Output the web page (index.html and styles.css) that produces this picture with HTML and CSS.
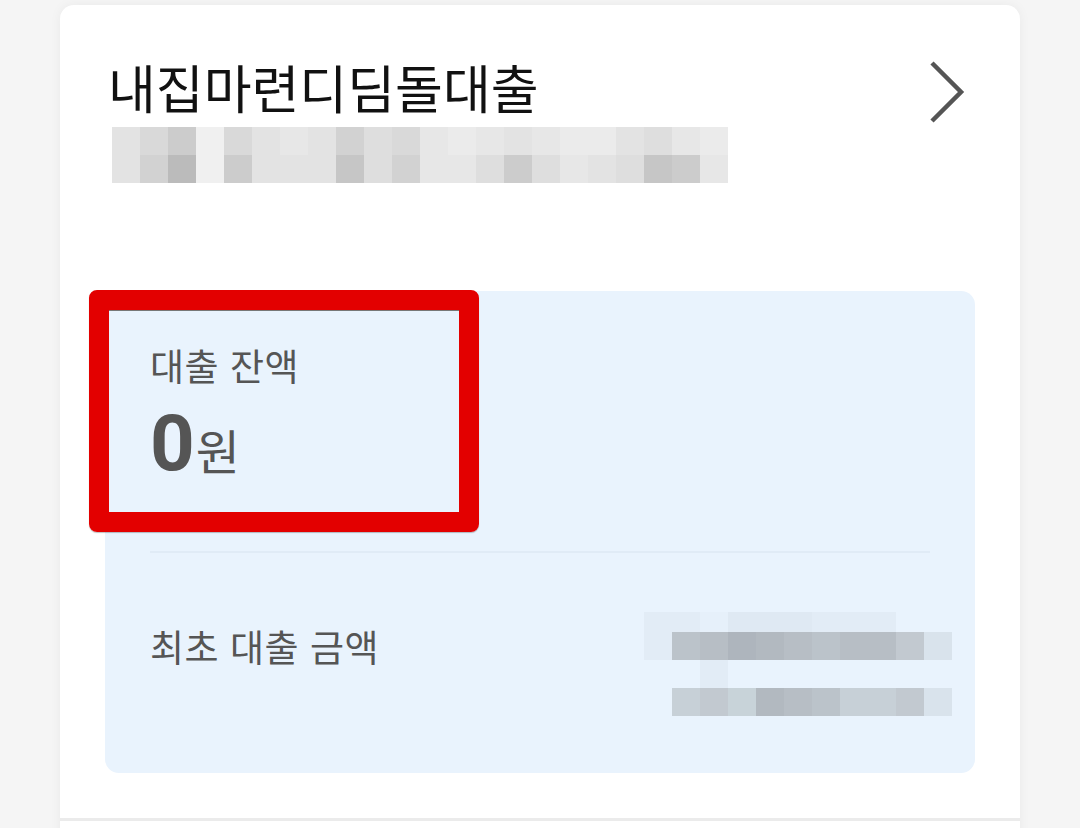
FILE: index.html
```html
<!DOCTYPE html>
<html lang="ko">
<head>
<meta charset="utf-8">
<link rel="stylesheet" href="styles.css">
</head>
<body>
<div class="card">
  <div class="head">
    <div class="titles">
      <h1 class="title">내집마련디딤돌대출</h1>
      <div class="mosaic top-mosaic">
        <i class="c3"></i><i class="c5"></i><i class="c7"></i><i class="c0"></i><i class="c5"></i><i class="c3"></i><i class="c2"></i><i class="c3"></i><i class="c6"></i><i class="c4"></i><i class="c5"></i><i class="c2"></i><i class="c1"></i><i class="c2"></i><i class="c3"></i><i class="c2"></i><i class="c1"></i><i class="c1"></i><i class="c3"></i><i class="c4"></i><i class="c2"></i><i class="c1"></i>
        <i class="c3"></i><i class="c6"></i><i class="c9"></i><i class="c0"></i><i class="c7"></i><i class="c3"></i><i class="c3"></i><i class="c3"></i><i class="c8"></i><i class="c4"></i><i class="c6"></i><i class="c2"></i><i class="c2"></i><i class="c4"></i><i class="c7"></i><i class="c4"></i><i class="c2"></i><i class="c3"></i><i class="c4"></i><i class="c8"></i><i class="c7"></i><i class="c2"></i>
      </div>
    </div>
    <svg class="chevron" width="40" height="64" viewBox="0 0 40 64" aria-hidden="true">
      <path d="M4 2 L33 31 L4 60" fill="none" stroke="#555" stroke-width="4.5"/>
    </svg>
  </div>

  <div class="loan-box">
    <div class="balance">
      <div class="label">대출 잔액</div>
      <div class="amount"><span class="num">0</span><span class="unit">원</span></div>
      <div class="highlight"></div>
    </div>
    <div class="divider"></div>
    <div class="row">
      <div class="label">최초 대출 금액</div>
      <div class="mosaic value-mosaic">
        <i class="b1"></i><i class="b1"></i><i class="b0"></i><i class="b2"></i><i class="b2"></i><i class="b2"></i><i class="b1"></i><i class="b1"></i><i class="b1"></i><i class="bn"></i><i class="bn"></i>
        <i class="b1"></i><i class="g3"></i><i class="g4"></i><i class="g6"></i><i class="g5"></i><i class="g4"></i><i class="g3"></i><i class="g4"></i><i class="g4"></i><i class="g2"></i><i class="b3"></i>
        <i class="bn"></i><i class="bn"></i><i class="b1"></i><i class="bn"></i><i class="bn"></i><i class="bn"></i><i class="bn"></i><i class="bn"></i><i class="bn"></i><i class="bn"></i><i class="bn"></i>
        <i class="bn"></i><i class="g1"></i><i class="g2"></i><i class="g0"></i><i class="g5"></i><i class="g4"></i><i class="g3"></i><i class="g1"></i><i class="g1"></i><i class="g2"></i><i class="b3"></i>
      </div>
    </div>
  </div>
  <div class="sep"></div>
  <div class="more"></div>
</div>
</body>
</html>
```

FILE: styles.css
```css
* { box-sizing: border-box; }

html, body {
  margin: 0;
  padding: 0;
  height: 100%;
  overflow: hidden;
}

body {
  background: #f5f5f5;
  font-family: "Noto Sans CJK KR", "Noto Sans", sans-serif;
  color: #555;
}

.card {
  margin: 5px 60px 0;
  background: #fff;
  border-radius: 14px 14px 0 0;
  box-shadow: 0 0 12px rgba(0, 0, 0, 0.05);
}

.head {
  display: flex;
  justify-content: space-between;
  align-items: flex-start;
  padding: 52px 52px 0 48px;
}

.title {
  margin: 0;
  font-size: 52px;
  font-weight: 400;
  line-height: 60px;
  color: #111;
  letter-spacing: 0;
}

.mosaic {
  display: grid;
  grid-auto-rows: 28px;
}

.mosaic i { display: block; }

.top-mosaic {
  margin-top: 10px;
  margin-left: 4px;
  grid-template-columns: repeat(22, 28px);
}

.c0 { background: #f0f0f0; }
.c1 { background: #ebebeb; }
.c2 { background: #e7e7e7; }
.c3 { background: #e3e3e3; }
.c4 { background: #dedede; }
.c5 { background: #d9d9d9; }
.c6 { background: #d2d2d2; }
.c7 { background: #cccccc; }
.c8 { background: #c6c6c6; }
.c9 { background: #bbbbbb; }

.chevron {
  margin-top: 4px;
  flex: none;
}

.loan-box {
  margin: 108px 45px 0;
  background: #e9f3fd;
  border-radius: 14px;
  padding: 0 45px;
}

.balance {
  position: relative;
  height: 260px;
  padding-top: 50px;
}

.label {
  font-size: 37px;
  line-height: 48px;
  color: #555;
  letter-spacing: 0.5px;
}

.amount {
  display: flex;
  align-items: baseline;
  margin-top: 10px;
  line-height: 90px;
}

.num {
  font-family: "Roboto", "Noto Sans", sans-serif;
  font-weight: 700;
  font-size: 78px;
  color: #555;
}

.unit {
  font-size: 48px;
  margin-left: 1px;
  color: #555;
}

.highlight {
  position: absolute;
  left: -61px;
  top: -1px;
  width: 390px;
  height: 242px;
  border: 20px solid #e30000;
  border-radius: 8px;
  box-shadow: inset 0 1px 0 #777, 0 1px 1px rgba(0, 0, 0, 0.25);
}

.divider {
  height: 2px;
  background: #e0ebf6;
}

.row {
  height: 220px;
  display: flex;
  justify-content: space-between;
  align-items: flex-start;
  padding-top: 59px;
}

.row .label {
  margin-top: 10px;
}

.value-mosaic {
  grid-template-columns: repeat(11, 28px);
  grid-template-rows: 20px 28px 28px 28px;
  margin-right: -22px;
}

.bn { background: transparent; }
.b0 { background: #e6f0fa; }
.b1 { background: #e2ecf6; }
.b2 { background: #dfe9f3; }
.b3 { background: #d9e3ec; }
.g0 { background: #c8d3d9; }
.g1 { background: #c7d0d7; }
.g2 { background: #c2c9d0; }
.g3 { background: #bbc3ca; }
.g4 { background: #b7bec5; }
.g5 { background: #b2b9c0; }
.g6 { background: #aeb5bd; }

.sep {
  margin-top: 45px;
  height: 3px;
  background: #ebebeb;
}

.more {
  height: 200px;
  background: #fff;
}
```
